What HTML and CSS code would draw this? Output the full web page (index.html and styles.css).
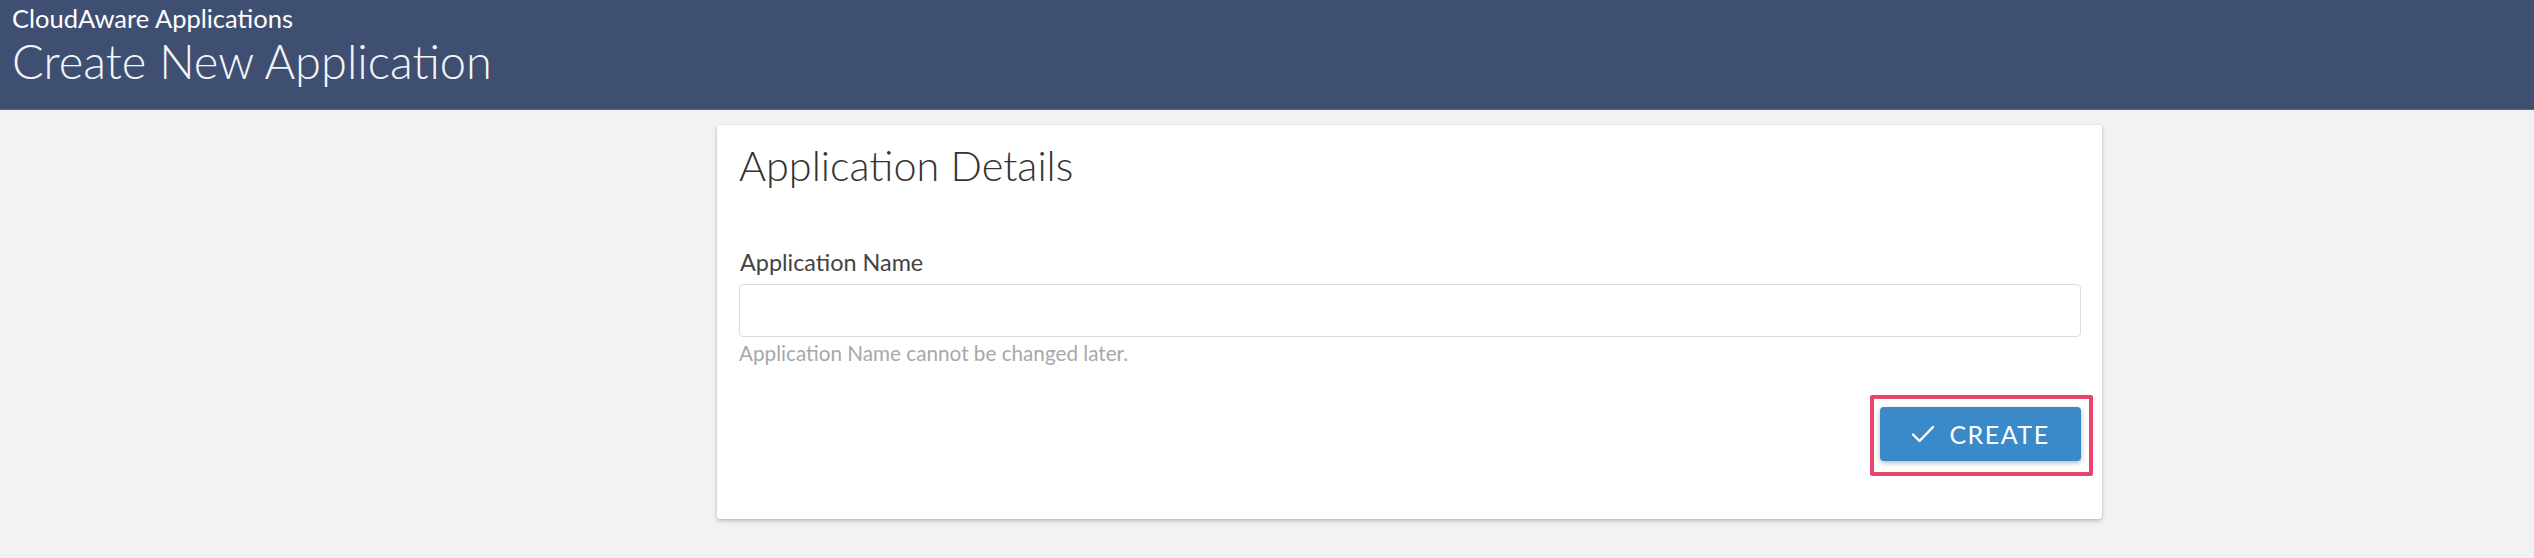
FILE: index.html
```html
<!DOCTYPE html>
<html lang="en">
<head>
<meta charset="utf-8">
<title>Create New Application</title>
<link rel="stylesheet" href="styles.css">
</head>
<body>
<header class="page-header">
  <div class="crumb">CloudAware Applications</div>
  <h1 class="page-title">Create New Application</h1>
</header>
<main class="content">
  <section class="card">
    <h2 class="card-title">Application Details</h2>
    <div class="field">
      <label class="field-label" for="app-name">Application Name</label>
      <input class="field-input" id="app-name" type="text">
      <div class="field-help">Application Name cannot be changed later.</div>
    </div>
    <div class="actions">
      <div class="highlight">
        <button class="btn-create" type="button">
          <svg class="btn-icon" width="24" height="18" viewBox="0 0 24 18" aria-hidden="true"><path d="M2 9.5 L8.5 16 L22 2" fill="none" stroke="#fff" stroke-width="2.4" stroke-linecap="round" stroke-linejoin="round"/></svg>
          <span>CREATE</span>
        </button>
      </div>
    </div>
  </section>
</main>
</body>
</html>
```
FILE: styles.css
```css
html, body {
  margin: 0;
  padding: 0;
}
body {
  background: #f2f2f2;
  font-family: Lato, "Open Sans", "Liberation Sans", sans-serif;
  color: #333;
  width: 2534px;
  height: 558px;
  overflow: hidden;
}
.page-header {
  background: #3f4f72;
  height: 110px;
  box-sizing: border-box;
  padding: 3px 0 0 12px;
  border-bottom: 1px solid #56658a;
  color: #fff;
}
.crumb {
  font-size: 25.5px;
  line-height: 30px;
  font-weight: 400;
}
.page-title {
  margin: 0;
  font-size: 47px;
  font-weight: 300;
  line-height: 56px;
  color: #f4f5f8;
}
.content {
  padding: 15px 0 0 717px;
}
.card {
  width: 1385px;
  height: 394px;
  box-sizing: border-box;
  background: #fff;
  border-radius: 3px;
  box-shadow: 0 2px 4px rgba(0, 0, 0, 0.22), 0 0 2px rgba(0, 0, 0, 0.08);
  padding: 15px 21px 0 22px;
}
.card-title {
  margin: 0;
  font-size: 41.4px;
  font-weight: 300;
  line-height: 50px;
  color: #333;
}
.field {
  margin-top: 59px;
  display: flex;
  flex-direction: column;
}
.field-label {
  font-size: 23.4px;
  line-height: 27px;
  color: #444;
  padding-left: 1px;
}
.field-input {
  margin-top: 8px;
  height: 53px;
  box-sizing: border-box;
  border: 1px solid #dcdcdc;
  border-radius: 4px;
  background: #fff;
  font-family: inherit;
  font-size: 22px;
  padding: 0 12px;
  outline: none;
}
.field-help {
  margin-top: 4px;
  font-size: 20.7px;
  line-height: 24px;
  color: #a8a8a8;
}
.actions {
  display: flex;
  justify-content: flex-end;
  margin-top: 42px;
}
.highlight {
  position: relative;
}
.highlight::after {
  content: "";
  position: absolute;
  left: -10px;
  right: -12px;
  top: -12px;
  bottom: -15px;
  border: 4px solid #e9466e;
  border-radius: 2px;
  pointer-events: none;
}
.btn-create {
  width: 201px;
  height: 54px;
  border: none;
  border-radius: 4px;
  background: #3a89c9;
  box-shadow: 0 2px 5px rgba(0, 0, 0, 0.28);
  color: #fff;
  font-family: inherit;
  font-size: 25px;
  letter-spacing: 1.5px;
  display: flex;
  align-items: center;
  justify-content: center;
  gap: 14px;
  padding: 0;
  cursor: pointer;
}
.btn-icon {
  display: block;
}
```
